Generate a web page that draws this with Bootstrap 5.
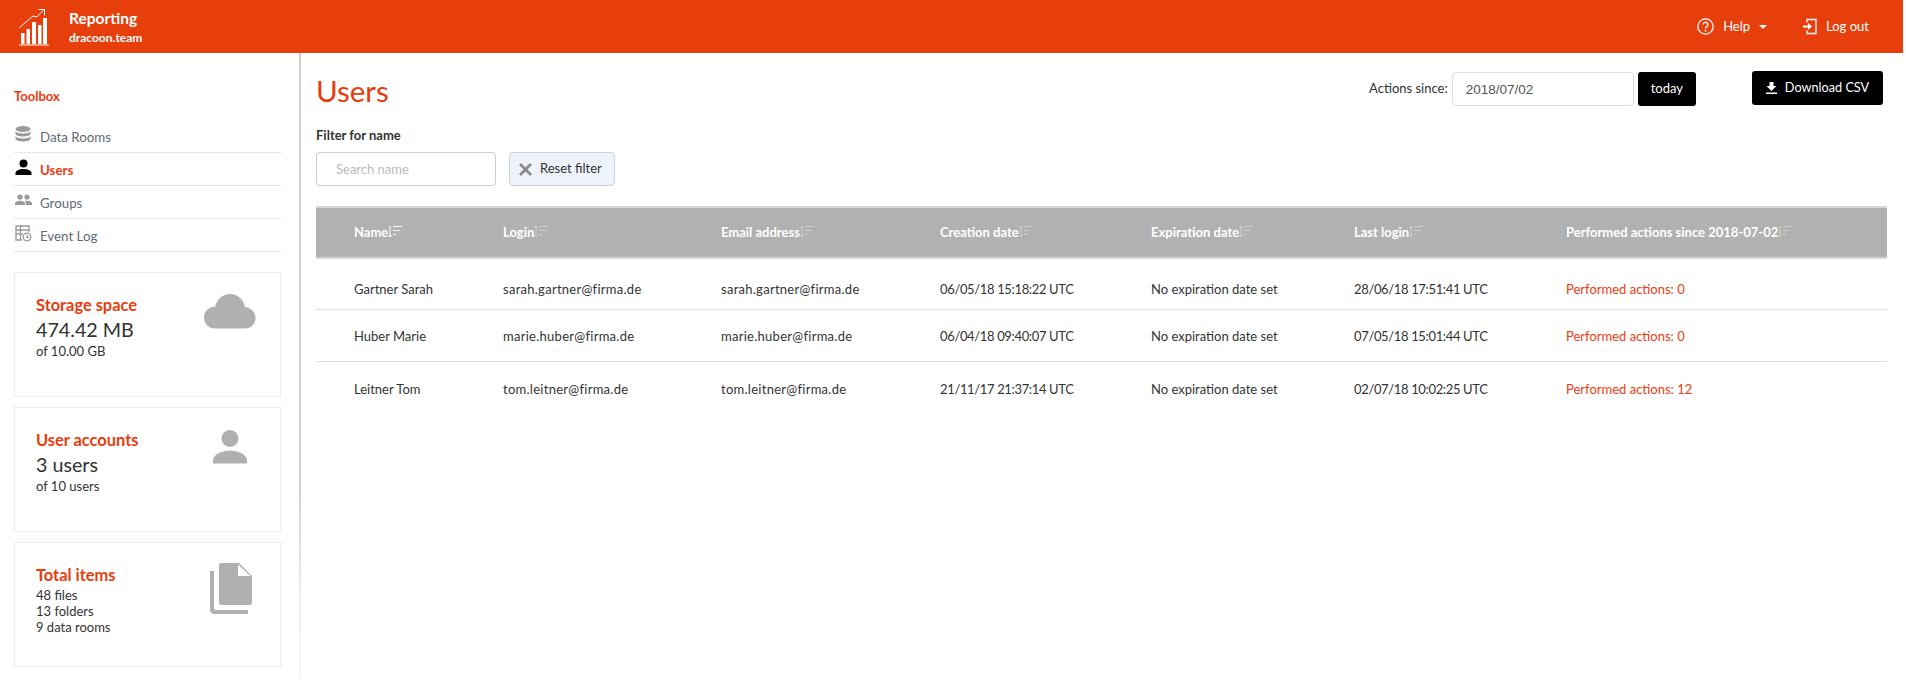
<!DOCTYPE html>
<html lang="en">
<head>
<meta charset="utf-8">
<title>Users</title>
<link href="https://cdn.jsdelivr.net/npm/bootstrap@5.3.0/dist/css/bootstrap.min.css" rel="stylesheet">
<style>
html,body{height:100%;overflow:hidden}
body{font-family:Lato,"Open Sans",sans-serif;font-size:13px;color:#333;background:#fff}
.shell{width:1903px;height:680px}
.topbar{height:53px;background:#e63f0c;color:#fff;padding:0 34px 0 19px}
.brand-box{margin-left:19px}
.brand-name{font-weight:700;font-size:15.5px;line-height:17px;margin-top:1px}
.brand-sub{font-weight:700;font-size:12px;line-height:15px;margin-top:3px}
.top-link{color:#fff;font-size:13px;text-decoration:none}
.help-link{gap:9px}
.out-link{margin-left:36px;gap:9px}
.side{width:301px;flex:none;border-right:2px solid #d4d4d4;border-image:linear-gradient(#cfcfcf 0,#cfcfcf 68%,#f0f0f0 88%,#f6f6f6 100%) 1;padding:0 18px 0 14px}
.tool-title{color:#ee3a10;font-weight:700;font-size:13px;line-height:16px;margin:35px 0 16px}
.side-item{height:33px;border-bottom:1px solid #e8e8e8;color:#5e6a75;font-size:13.3px;padding-left:26px;position:relative;line-height:34px}
.side-item svg{position:absolute;left:1px;top:6px}
.side-item.on{color:#ee3a10;font-weight:700}
.info-box{height:125px;border:1px solid #ececec;padding:22px 21px;position:relative;margin-bottom:10px}
.first-box{margin-top:20px}
.info-box h2{color:#e83c0c;font-size:16.4px;font-weight:700;line-height:20px;margin:0 0 2px}
.info-val{font-size:19.7px;line-height:26px;color:#333}
.info-sub{font-size:13px;line-height:16px;color:#333}
.info-list{margin-top:2px}
.info-box svg{position:absolute}
.cloud-ico{right:24px;top:21px}
.person-ico{right:33px;top:22px}
.file-ico{right:28px;top:20px}
.main{flex:1;padding:0 15px;min-width:0}
.head-row{height:53px}
.page-title{color:#e83c0c;font-size:29.5px;font-weight:400;line-height:40px;margin:18px 0 0}
.head-tools{padding-top:18px;margin-right:5px}
.since{font-size:13px;color:#333;margin-top:1px}
.since-input{width:182px;height:34px;border:1px solid #ddd;border-radius:4px;padding:0 13px;font-size:13.5px;font-family:"Liberation Sans",sans-serif;color:#555;margin:0 4px}
.black-btn{background:#000;color:#fff;border:0;border-radius:3px;height:34px;font-size:13px;padding:0 13px;display:inline-flex;align-items:center}
.dl-btn{margin-left:56px;font-size:12.7px;width:131px;justify-content:center}
.filter-label{font-weight:700;font-size:13px;line-height:16px;color:#333;margin:21px 0 9px}
.filter-row{gap:13px}
.search-box{width:180px;height:34px;border:1px solid #ccc;border-radius:4px;padding:0 19px;font-size:13px}
.search-box::placeholder{color:#bbb}
.reset-btn{height:34px;width:106px;background:#eef2fa;border:1px solid #ccd0d8;border-radius:4px;font-size:13px;color:#333;padding:0 0 0 9px;display:flex;align-items:center;gap:8px}
.users-table{table-layout:fixed;width:1571px;border-collapse:collapse;margin:20px 0 0;font-size:13px}
.users-table th{background:#b1b1b1;color:#fff;font-weight:700;height:51px;border-top:2px solid #d8d8d8;border-bottom:2px solid #d8d8d8;padding:0;vertical-align:middle;white-space:nowrap}
.users-table td{padding:0;vertical-align:middle;color:#333;border-bottom:1px solid #ddd;white-space:nowrap}
.users-table tr:last-child td{border-bottom:0}
.users-table th:first-child,.users-table td:first-child{padding-left:38px}
.users-table .act{color:#ee3a10}
.users-table .mail{letter-spacing:.27px}
.users-table .when{letter-spacing:-.35px}
.row-a{height:51px}.row-a td{padding-top:12px}
.row-b{height:52px}.row-b td{padding-top:3px}
.row-c{height:54px}.row-c td{padding-top:2px}
.col-a{width:187px}.col-b{width:218px}.col-c{width:219px}.col-d{width:211px}.col-e{width:203px}.col-f{width:212px}
.sort-ico{vertical-align:-2px}
</style>
</head>
<body>
<div class="shell d-flex flex-column">
  <header class="topbar d-flex align-items-center justify-content-between">
    <div class="d-flex align-items-center">
      <svg width="31" height="38" viewBox="0 0 31 38" fill="none"><g fill="#fff"><rect x="2" y="25" width="3.500" height="11"/><rect x="7.500" y="21" width="3.500" height="15"/><rect x="13" y="14" width="4" height="22"/><rect x="19" y="17" width="3.500" height="19"/><rect x="24" y="10" width="4" height="26"/><rect x="0" y="36.500" width="30" height="1"/></g><path d="M0 20 L14 8 L18 9 L25 1.500" stroke="#fff" stroke-width="1"/><path d="M19.500 1.500 H25.500 V7.500" stroke="#fff" stroke-width="1"/></svg>
      <div class="brand-box">
        <div class="brand-name">Reporting</div>
        <div class="brand-sub">dracoon.team</div>
      </div>
    </div>
    <div class="d-flex align-items-center">
      <a class="top-link help-link d-flex align-items-center" href="#">
        <svg width="17" height="17" viewBox="0 0 16 16" fill="none"><circle cx="8" cy="8" r="7.200" stroke="#fff" stroke-width="1.200"/><path d="M5.800 6.200a2.200 2.200 0 1 1 3.400 1.900c-.8.5-1.200.9-1.200 1.900" stroke="#fff" stroke-width="1.300"/><circle cx="8" cy="12" r=".9" fill="#fff"/></svg>
        <span>Help</span>
        <svg width="8" height="4" viewBox="0 0 8 4"><path d="M0 0H8L4 4Z" fill="#fff"/></svg>
      </a>
      <a class="top-link out-link d-flex align-items-center" href="#">
        <svg width="14" height="17" viewBox="0 0 14 16" fill="none"><path d="M4 4V1H13V15H4V12" stroke="#fff" stroke-width="1.300"/><path d="M0 7H5V4.500L9 8 5 11.500V9H0Z" fill="#fff"/></svg>
        <span>Log out</span>
      </a>
    </div>
  </header>
  <div class="d-flex flex-grow-1">
    <aside class="side">
      <div class="tool-title">Toolbox</div>
      <div class="side-item"><svg width="16" height="16" viewBox="0 0 16 16" fill="#999"><ellipse cx="8" cy="3" rx="7.500" ry="3"/><path d="M.5 5c1 1.800 3.800 2.500 7.500 2.500S14.500 6.800 15.500 5v2.500c0 1.700-3.400 3-7.500 3S.5 9.200.5 7.500Z"/><path d="M.5 10c1 1.800 3.800 2.500 7.500 2.500s6.500-.7 7.500-2.500v2.500c0 1.700-3.400 3-7.500 3s-7.500-1.300-7.500-3Z"/></svg>Data Rooms</div>
      <div class="side-item on"><svg width="17" height="16" viewBox="0 0 17 16" fill="#000"><circle cx="8.500" cy="4.500" r="4"/><path d="M.5 16v-2c0-2.500 4.500-4 8-4s8 1.500 8 4v2Z"/></svg>Users</div>
      <div class="side-item"><svg width="17" height="16" viewBox="0 0 17 16" fill="#999"><circle cx="5" cy="5" r="2.600"/><circle cx="12" cy="5" r="2.600"/><path d="M0 13v-1.500C0 9.500 3 8.700 5 8.700s5 .8 5 2.800V13Z"/><path d="M11 13v-1.500c0-1-.5-1.800-1.300-2.400.7-.3 1.700-.4 2.300-.4 2 0 5 .8 5 2.800V13Z"/></svg>Groups</div>
      <div class="side-item"><svg width="17" height="17" viewBox="0 0 17 17" fill="none" stroke="#999" stroke-width="1.300"><path d="M7 15H1V1H14V7"/><path d="M1 5H14M1 9H8M5.500 1V15"/><circle cx="12" cy="12" r="3.800"/><path d="M12 10V12.300H14"/></svg>Event Log</div>
      <div class="info-box first-box">
        <h2>Storage space</h2>
        <div class="info-val">474.42 MB</div>
        <div class="info-sub">of 10.00 GB</div>
        <svg class="cloud-ico" width="52" height="35" viewBox="0 0 52 35" fill="#b0b0b0"><path d="M11 34.500C5 34.500 0 30 0 23.500 0 17 5 12.700 11 12.700 13 5 19 0 26 0c8 0 14 6 15 13 6 .7 10.500 5 10.500 11 0 6-4.700 10.500-10.500 10.500Z"/></svg>
      </div>
      <div class="info-box">
        <h2>User accounts</h2>
        <div class="info-val">3 users</div>
        <div class="info-sub">of 10 users</div>
        <svg class="person-ico" width="34" height="34" viewBox="0 0 34 34" fill="#b0b0b0"><circle cx="17" cy="8.500" r="8.500"/><path d="M0 33.500v-3C0 24 10 20.500 17 20.500S34 24 34 30.500v3Z"/></svg>
      </div>
      <div class="info-box mb-0">
        <h2>Total items</h2>
        <div class="info-sub info-list">48 files</div>
        <div class="info-sub">13 folders</div>
        <div class="info-sub">9 data rooms</div>
        <svg class="file-ico" width="42" height="51" viewBox="0 0 42 51" fill="#b0b0b0"><path d="M9 2.500C9 1 10 0 11.500 0H29L42 13V39c0 1.500-1 3-2.500 3H11.500C10 42 9 41 9 39.500Z"/><path d="M28 1.500V13H40.500Z" fill="#fff"/><path d="M0 8H4V45C4 46 5 47 6 47H38V51H4C2 51 0 49 0 47Z"/></svg>
      </div>
    </aside>
    <main class="main">
      <div class="head-row d-flex justify-content-between">
        <h1 class="page-title">Users</h1>
        <div class="head-tools d-flex align-items-start">
          <div class="since d-flex align-items-center"><span>Actions since:</span><input class="since-input" value="2018/07/02"><button class="black-btn">today</button></div>
          <button class="black-btn dl-btn">
            <svg width="11" height="12" viewBox="0 0 11 12" fill="#fff" class="me-2"><path d="M3.500 0H7.500V4H10.500L5.500 9 .5 4H3.500Z"/><rect y="10.500" width="11" height="1.500"/></svg>Download CSV</button>
        </div>
      </div>
      <div class="filter-label">Filter for name</div>
      <div class="filter-row d-flex">
        <input class="search-box" placeholder="Search name">
        <button class="reset-btn"><svg width="13" height="13" viewBox="0 0 13 13"><path d="M1 1 12 12M12 1 1 12" stroke="#8a8a8a" stroke-width="2.800"/></svg>Reset filter</button>
      </div>
      <table class="users-table">
        <colgroup><col class="col-a"><col class="col-b"><col class="col-c"><col class="col-d"><col class="col-e"><col class="col-f"><col></colgroup>
        <thead><tr>
          <th>Name<svg class="sort-ico" width="15" height="14" viewBox="0 0 15 14" fill="none" stroke="#fff"><path d="M2 1V12M.5 10 2 12 3.500 10M5 1.500H14M5 5.500H11.500M5 9.500H8"/></svg></th>
          <th>Login<svg class="sort-ico" width="15" height="14" viewBox="0 0 15 14" fill="none" stroke="#cfcfcf"><path d="M2 1V12M.5 3 2 1 3.500 3M.5 10 2 12 3.500 10M5 1.500H14M5 5.500H11.500M5 9.500H8"/></svg></th>
          <th>Email address<svg class="sort-ico" width="15" height="14" viewBox="0 0 15 14" fill="none" stroke="#cfcfcf"><path d="M2 1V12M.5 3 2 1 3.500 3M.5 10 2 12 3.500 10M5 1.500H14M5 5.500H11.500M5 9.500H8"/></svg></th>
          <th>Creation date<svg class="sort-ico" width="15" height="14" viewBox="0 0 15 14" fill="none" stroke="#cfcfcf"><path d="M2 1V12M.5 3 2 1 3.500 3M.5 10 2 12 3.500 10M5 1.500H14M5 5.500H11.500M5 9.500H8"/></svg></th>
          <th>Expiration date<svg class="sort-ico" width="15" height="14" viewBox="0 0 15 14" fill="none" stroke="#cfcfcf"><path d="M2 1V12M.5 3 2 1 3.500 3M.5 10 2 12 3.500 10M5 1.500H14M5 5.500H11.500M5 9.500H8"/></svg></th>
          <th>Last login<svg class="sort-ico" width="15" height="14" viewBox="0 0 15 14" fill="none" stroke="#cfcfcf"><path d="M2 1V12M.5 3 2 1 3.500 3M.5 10 2 12 3.500 10M5 1.500H14M5 5.500H11.500M5 9.500H8"/></svg></th>
          <th>Performed actions since 2018-07-02<svg class="sort-ico" width="15" height="14" viewBox="0 0 15 14" fill="none" stroke="#cfcfcf"><path d="M2 1V12M.5 3 2 1 3.500 3M.5 10 2 12 3.500 10M5 1.500H14M5 5.500H11.500M5 9.500H8"/></svg></th>
        </tr></thead>
        <tbody>
          <tr class="row-a"><td>Gartner Sarah</td><td class="mail">sarah.gartner@firma.de</td><td class="mail">sarah.gartner@firma.de</td><td class="when">06/05/18 15:18:22 UTC</td><td>No expiration date set</td><td class="when">28/06/18 17:51:41 UTC</td><td class="act">Performed actions: 0</td></tr>
          <tr class="row-b"><td>Huber Marie</td><td class="mail">marie.huber@firma.de</td><td class="mail">marie.huber@firma.de</td><td class="when">06/04/18 09:40:07 UTC</td><td>No expiration date set</td><td class="when">07/05/18 15:01:44 UTC</td><td class="act">Performed actions: 0</td></tr>
          <tr class="row-c"><td>Leitner Tom</td><td class="mail">tom.leitner@firma.de</td><td class="mail">tom.leitner@firma.de</td><td class="when">21/11/17 21:37:14 UTC</td><td>No expiration date set</td><td class="when">02/07/18 10:02:25 UTC</td><td class="act">Performed actions: 12</td></tr>
        </tbody>
      </table>
    </main>
  </div>
</div>
<script src="https://cdn.jsdelivr.net/npm/bootstrap@5.3.0/dist/js/bootstrap.bundle.min.js"></script>
</body>
</html>
